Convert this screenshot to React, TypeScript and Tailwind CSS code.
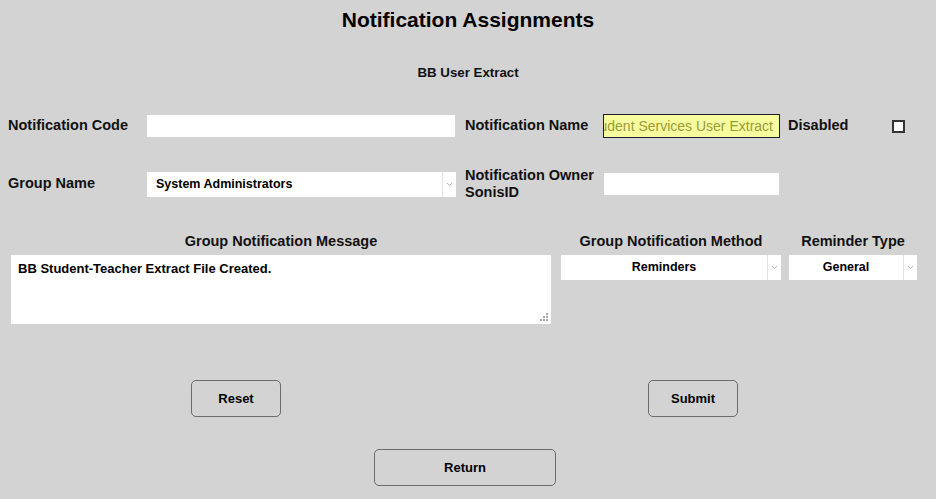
import React from 'react';

const labelFont = { fontFamily: '"Liberation Sans", Arial, sans-serif' };

function Chevron() {
    return (
        <svg width="7" height="5" viewBox="0 0 7 5" fill="none">
            <path d="M1 1l2.5 2.5L6 1" stroke="#b5b5b5" strokeWidth="1" />
        </svg>
    );
}

function FakeSelect({ value, center = false, className }: { value: string; center?: boolean; className: string }) {
    return (
        <div className={`flex bg-white ${className}`}>
            <div className={`flex-1 flex items-center text-[12.5px] font-bold text-black ${center ? 'justify-center' : 'pl-[9px]'}`}>
                {value}
            </div>
            <div className="w-[14px] border-l border-[#e2e2e2] flex items-center justify-center">
                <Chevron />
            </div>
        </div>
    );
}

function Btn({ label, className }: { label: string; className: string }) {
    return (
        <button className={`h-[37px] rounded-[5px] border border-[#6b6b6b] bg-[#d3d3d3] text-[13px] font-bold text-black ${className}`}>
            {label}
        </button>
    );
}

export default function App() {
    return (
        <div className="w-[936px] h-[499px] bg-[#d3d3d3] overflow-hidden text-[#111]" style={labelFont}>
            {/* Header */}
            <h1 className="pt-[8px] h-[32px] leading-[24px] text-center text-[21px] font-bold text-black">Notification Assignments</h1>
            <div className="mt-[33px] text-center text-[13.3px] leading-[16px] font-bold">BB User Extract</div>

            {/* Row 1 */}
            <div className="mt-[33px] flex items-center pl-[8px] h-[24px]">
                <span className="w-[139px] text-[14.5px] font-bold">Notification Code</span>
                <div className="w-[308px] h-[22px] bg-white" />
                <span className="ml-[10px] w-[138px] text-[14.5px] font-bold whitespace-nowrap">Notification Name</span>
                <div className="w-[177px] h-[24px] bg-[#f7fd9f] border-[1.5px] border-[#1c1f2e] overflow-hidden flex items-center justify-end pr-[6px] whitespace-nowrap text-[14px] text-[#9a9a38]">
                    BB Student Services User Extract
                </div>
                <span className="ml-[8px] w-[104px] text-[14.5px] font-bold">Disabled</span>
                <div className="w-[13px] h-[13px] bg-white border-2 border-[#333]" />
            </div>

            {/* Row 2 */}
            <div className="mt-[29px] flex items-center pl-[8px] h-[34px]">
                <span className="w-[139px] text-[14.5px] font-bold">Group Name</span>
                <FakeSelect value="System Administrators" className="w-[309px] h-[25px]" />
                <span className="ml-[9px] w-[139px] text-[14.5px] leading-[17px] font-bold whitespace-nowrap">
                    Notification Owner
                    <br />
                    SonisID
                </span>
                <div className="w-[175px] h-[22px] bg-white" />
            </div>

            {/* Row 3 */}
            <div className="mt-[32px] flex pl-[11px] gap-[10px]">
                <div className="w-[540px] flex flex-col">
                    <span className="text-center text-[14.5px] leading-[16px] font-bold">Group Notification Message</span>
                    <div className="relative mt-[6px] h-[69px] bg-white pl-[7px] pt-[4px] text-[13px] font-bold text-black">
                        BB Student-Teacher Extract File Created.
                        <svg className="absolute right-[3px] bottom-[3px]" width="8" height="8" viewBox="0 0 8 8">
                            <rect x="6" y="0" width="2" height="2" fill="#a5a5a5" />
                            <rect x="3" y="3" width="2" height="2" fill="#a5a5a5" />
                            <rect x="6" y="3" width="2" height="2" fill="#a5a5a5" />
                            <rect x="0" y="6" width="2" height="2" fill="#a5a5a5" />
                            <rect x="3" y="6" width="2" height="2" fill="#a5a5a5" />
                            <rect x="6" y="6" width="2" height="2" fill="#a5a5a5" />
                        </svg>
                    </div>
                </div>
                <div className="w-[220px] flex flex-col">
                    <span className="text-center text-[14.5px] leading-[16px] font-bold whitespace-nowrap">Group Notification Method</span>
                    <FakeSelect value="Reminders" center className="mt-[6px] h-[25px]" />
                </div>
                <div className="ml-[-2px] w-[128px] flex flex-col">
                    <span className="text-center text-[14.5px] leading-[16px] font-bold whitespace-nowrap">Reminder Type</span>
                    <FakeSelect value="General" center className="mt-[6px] h-[25px]" />
                </div>
            </div>

            {/* Buttons */}
            <div className="mt-[56px] flex">
                <Btn label="Reset" className="ml-[191px] w-[90px]" />
                <Btn label="Submit" className="ml-[367px] w-[90px]" />
            </div>
            <div className="mt-[32px] flex">
                <Btn label="Return" className="ml-[374px] w-[182px]" />
            </div>
        </div>
    );
}
